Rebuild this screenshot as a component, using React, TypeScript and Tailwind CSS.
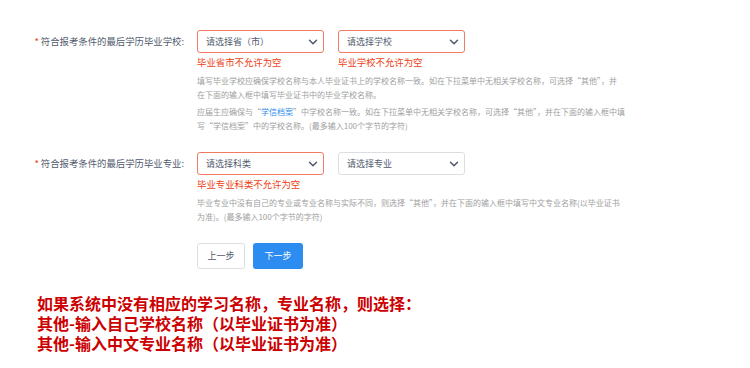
const FONT = "font-['Microsoft_YaHei','Noto_Sans_CJK_SC',sans-serif]";

function Chevron() {
    return (
        <svg width="10" height="10" viewBox="0 0 10 10" className="shrink-0">
            <path d="M1.5 3.2 L5 6.8 L8.5 3.2" fill="none" stroke="#515a6e" strokeWidth="1.5" strokeLinecap="round" strokeLinejoin="round" />
        </svg>
    );
}

function Select({ text, error }: { text: string; error?: boolean }) {
    return (
        <div
            className={`flex h-[23px] w-[127px] items-center justify-between rounded-[3px] border bg-white pr-[5px] pl-[8px] ${
                error ? "border-[#f07a62]" : "border-[#dcdee2]"
            }`}
        >
            <span className="text-[9px] leading-none text-[#515a6e]">{text}</span>
            <Chevron />
        </div>
    );
}

function Label({ text }: { text: string }) {
    return (
        <div className="flex h-[23px] items-center justify-end pr-[13px] text-[9.4px] text-[#515a6e]">
            <span className="mr-[2px] text-[#ed4014]">*</span>
            {text}
        </div>
    );
}

export default function App() {
    return (
        <div className={`h-[368px] w-[750px] bg-white ${FONT}`}>
            {/* Form */}
            <div className="grid grid-cols-[197px_1fr] pt-[30px]">
                {/* School row */}
                <Label text="符合报考条件的最后学历毕业学校:" />
                <div>
                    <div className="flex gap-[14px]">
                        <div>
                            <Select text="请选择省（市）" error />
                            <p className="mt-[3px] text-[9.4px] leading-[12px] text-[#ed4014]">毕业省市不允许为空</p>
                        </div>
                        <div>
                            <Select text="请选择学校" error />
                            <p className="mt-[3px] text-[9.4px] leading-[12px] text-[#ed4014]">毕业学校不允许为空</p>
                        </div>
                    </div>
                    <div className="mt-[6px] text-[8px] leading-[14px] whitespace-nowrap text-[#a0a0a0]">
                        <p>填写毕业学校应确保学校名称与本人毕业证书上的学校名称一致。如在下拉菜单中无相关学校名称，可选择“其他”，并</p>
                        <p>在下面的输入框中填写毕业证书中的毕业学校名称。</p>
                        <p className="mt-[3px]">
                            应届生应确保与“<span className="text-[#2d8cf0]">学信档案</span>”中学校名称一致。如在下拉菜单中无相关学校名称，可选择“其他”，并在下面的输入框中填
                        </p>
                        <p>写“学信档案”中的学校名称。(最多输入100个字节的字符)</p>
                    </div>
                </div>

                {/* Major row */}
                <div className="mt-[19px]">
                    <Label text="符合报考条件的最后学历毕业专业:" />
                </div>
                <div className="mt-[19px]">
                    <div className="flex gap-[14px]">
                        <div>
                            <Select text="请选择科类" error />
                            <p className="mt-[3px] text-[9.4px] leading-[12px] text-[#ed4014]">毕业专业科类不允许为空</p>
                        </div>
                        <Select text="请选择专业" />
                    </div>
                    <div className="mt-[6px] text-[8px] leading-[14px] whitespace-nowrap text-[#a0a0a0]">
                        <p>毕业专业中没有自己的专业或专业名称与实际不同，则选择“其他”，并在下面的输入框中填写中文专业名称(以毕业证书</p>
                        <p>为准)。(最多输入100个字节的字符)</p>
                    </div>

                    {/* Buttons */}
                    <div className="mt-[19px] flex gap-[8px]">
                        <button className="h-[26px] w-[48px] rounded-[3px] border border-[#dcdee2] bg-white text-[9px] text-[#515a6e]">
                            上一步
                        </button>
                        <button className="h-[26px] w-[50px] rounded-[3px] bg-[#2d8cf0] text-[9px] text-white">
                            下一步
                        </button>
                    </div>
                </div>
            </div>

            {/* Note */}
            <div className="mt-[24px] pl-[37px] text-[16px] leading-[20px] font-bold text-[#cc0000]">
                <p>如果系统中没有相应的学习名称，专业名称，则选择：</p>
                <p>其他-输入自己学校名称（以毕业证书为准）</p>
                <p>其他-输入中文专业名称（以毕业证书为准）</p>
            </div>
        </div>
    );
}
